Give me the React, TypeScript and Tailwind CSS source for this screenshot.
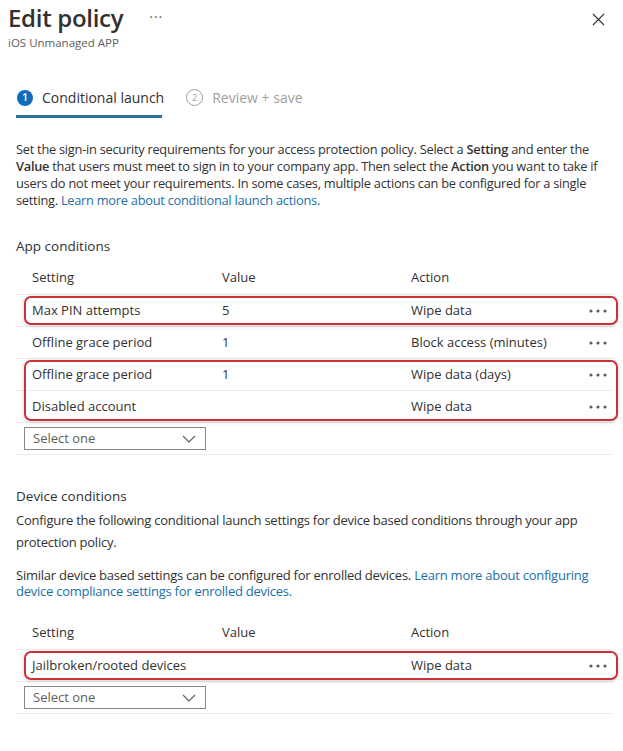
import React from "react";

type Row = { setting: string; value: string; action: string };

const appGroups: Row[][] = [
  [{ setting: "Max PIN attempts", value: "5", action: "Wipe data" }],
  [{ setting: "Offline grace period", value: "1", action: "Block access (minutes)" }],
  [
    { setting: "Offline grace period", value: "1", action: "Wipe data (days)" },
    { setting: "Disabled account", value: "", action: "Wipe data" },
  ],
];

const deviceGroups: Row[][] = [
  [{ setting: "Jailbroken/rooted devices", value: "", action: "Wipe data" }],
];

function MoreDots() {
  return (
    <svg width="18" height="4" viewBox="0 0 18 4" className="text-[#605e5c]">
      <circle cx="2" cy="2" r="1.6" fill="currentColor" />
      <circle cx="9" cy="2" r="1.6" fill="currentColor" />
      <circle cx="16" cy="2" r="1.6" fill="currentColor" />
    </svg>
  );
}

function GridRow({ row }: { row: Row }) {
  return (
    <div className="flex h-8 items-center border-b border-[#edebe9] pl-4 pr-[6px]">
      <div className="w-[190px]">{row.setting}</div>
      <div className="w-[189px]">{row.value}</div>
      <div className="flex-1">{row.action}</div>
      <MoreDots />
    </div>
  );
}

function Group({ rows, highlight }: { rows: Row[]; highlight: boolean }) {
  return (
    <div className="relative">
      {rows.map((r, i) => (
        <GridRow key={i} row={r} />
      ))}
      {highlight ? (
        <span className="pointer-events-none absolute top-[1px] bottom-[2px] left-2 -right-[5px] rounded-[7px] border-2 border-[#c93038] shadow-[0_1px_4px_rgba(0,0,0,0.18)]" />
      ) : null}
    </div>
  );
}

function Select() {
  return (
    <div className="flex h-8 items-center border-b border-[#edebe9]">
      <div className="ml-2 flex h-[23px] w-[182px] items-center justify-between border border-[#8a8886] pl-2 pr-[9px] text-[#605e5c]">
        <span>Select one</span>
        <svg width="14" height="8" viewBox="0 0 14 8" fill="none">
          <path d="M1 1l6 6 6-6" stroke="#605e5c" strokeWidth="1.1" />
        </svg>
      </div>
    </div>
  );
}

function Table({ groups, highlights }: { groups: Row[][]; highlights: boolean[] }) {
  return (
    <div className="text-[13px] text-[#323130]">
      <div className="flex h-[34px] items-center border-b border-[#edebe9] pl-4">
        <div className="w-[190px]">Setting</div>
        <div className="w-[189px]">Value</div>
        <div>Action</div>
      </div>
      {groups.map((g, i) => (
        <Group key={i} rows={g} highlight={highlights[i]} />
      ))}
      <Select />
    </div>
  );
}

export default function App() {
  return (
    <div
      className="min-h-screen w-[623px] bg-white text-[#323130]"
      style={{ fontFamily: '"Segoe UI", "Open Sans", "Noto Sans", sans-serif' }}
    >
      <div className="flex items-start justify-between pl-2 pr-[18px] pt-[1px]">
        <div>
          <div className="flex items-center">
            <h1 className="text-[24px] leading-[34px] font-semibold tracking-[-0.3px] text-[#323130]">
              Edit policy
            </h1>
            <span className="ml-[26px] mt-[-4px] text-[14px] tracking-[1px] text-[#605e5c]">···</span>
          </div>
          <div className="-mt-[1px] text-[11.5px] text-[#605e5c]">iOS Unmanaged APP</div>
        </div>
        <svg width="13" height="13" viewBox="0 0 13 13" className="mt-[12px]">
          <path d="M1 1l11 11M12 1L1 12" stroke="#323130" strokeWidth="1.1" />
        </svg>
      </div>

      <div className="mt-[36px] flex items-end gap-[22px] pl-4">
        <div className="flex flex-col">
          <div className="flex items-center gap-[9px] pl-[1px]">
            <span className="flex h-[16px] w-[16px] items-center justify-center rounded-full bg-[#0f6cbd] text-[10px] font-semibold text-white">
              1
            </span>
            <span className="text-[14px] font-medium text-[#323130]">Conditional launch</span>
          </div>
          <div className="mt-[7px] h-[3px] w-[146px] bg-[#2a739b]" />
        </div>
        <div className="mb-[10px] flex items-center gap-[9px]">
          <span className="flex h-[17px] w-[17px] items-center justify-center rounded-full border border-[#a19f9d] text-[9px] text-[#a19f9d]">
            2
          </span>
          <span className="text-[14px] text-[#a19f9d]">Review + save</span>
        </div>
      </div>

      <div className="pl-4 pr-[10px]">
        <p className="mt-[23px] pr-[6px] text-[12.8px] leading-[17px] tracking-[-0.25px]">
          Set the sign-in security requirements for your access protection policy. Select a{" "}
          <b className="font-semibold">Setting</b> and enter the <b className="font-semibold">Value</b> that
          users must meet to sign in to your company app. Then select the{" "}
          <b className="font-semibold">Action</b> you want to take if users do not meet your requirements. In
          some cases, multiple actions can be configured for a single setting.{" "}
          <span className="text-[#1a6fa8]">Learn more about conditional launch actions.</span>
        </p>

        <h2 className="mt-[28px] text-[13.5px] leading-[18px]">App conditions</h2>
        <div className="mt-[6px]">
          <Table groups={appGroups} highlights={[true, false, true]} />
        </div>

        <h2 className="mt-[32px] text-[13.5px] leading-[18px]">Device conditions</h2>
        <p className="mt-[4px] pr-[6px] text-[13px] leading-[22px] tracking-[-0.25px]">
          Configure the following conditional launch settings for device based conditions through your app
          protection policy.
        </p>
        <p className="mt-[14px] pr-[6px] text-[13px] leading-[16px] tracking-[-0.25px]">
          Similar device based settings can be configured for enrolled devices.{" "}
          <span className="text-[#1a6fa8]">
            Learn more about configuring device compliance settings for enrolled devices.
          </span>
        </p>
        <div className="mt-[17px]">
          <Table groups={deviceGroups} highlights={[true]} />
        </div>
      </div>
    </div>
  );
}
